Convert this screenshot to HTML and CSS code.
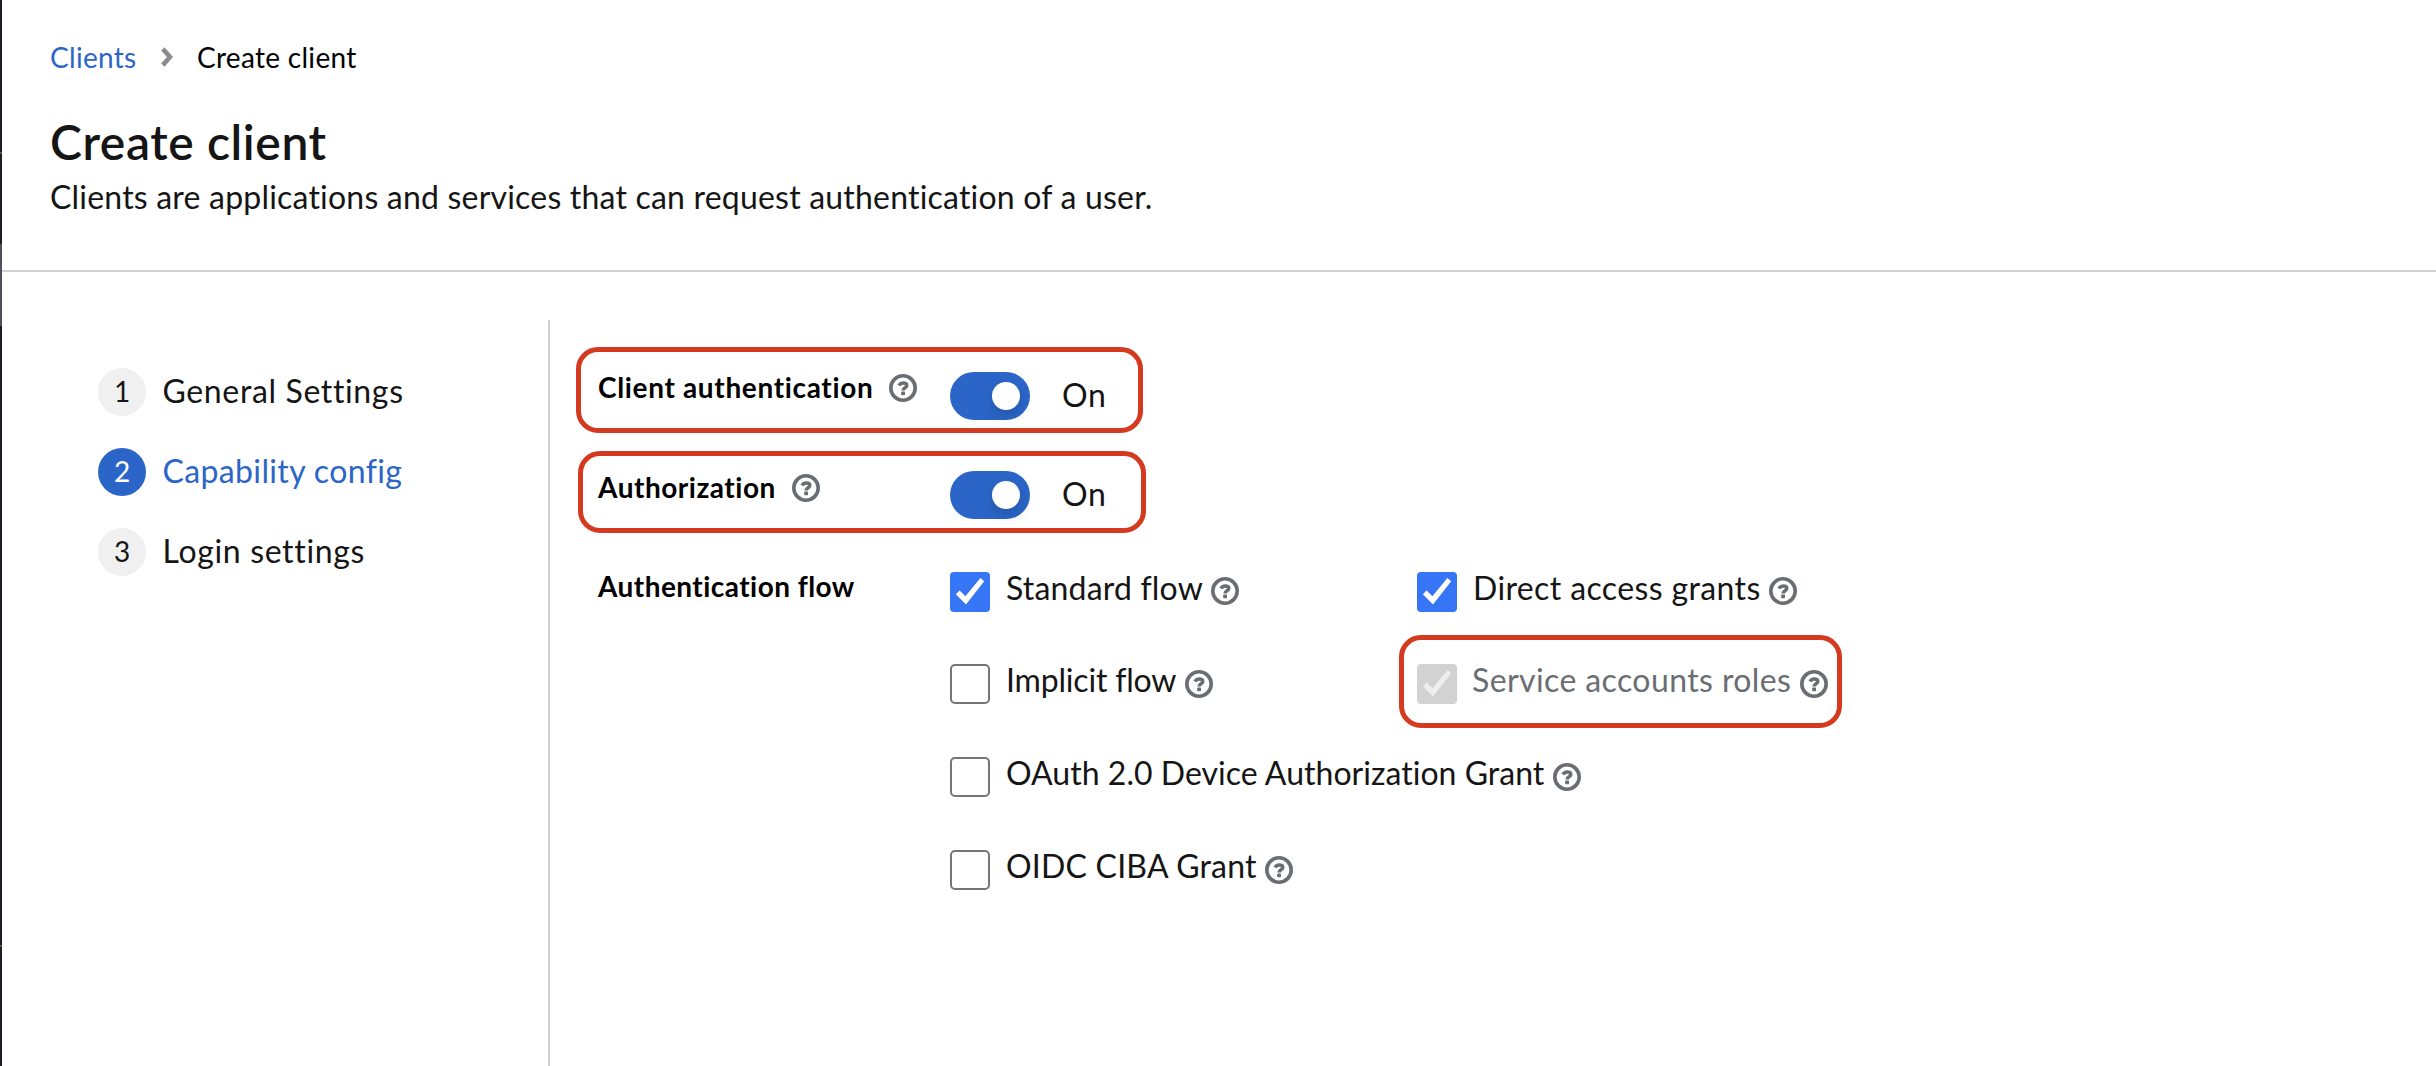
FILE: index.html
```
<!DOCTYPE html>
<html lang="en">
<head>
<meta charset="utf-8">
<title>Create client</title>
<link rel="stylesheet" href="styles.css">
</head>
<body>
<svg class="defs" aria-hidden="true">
  <symbol id="help" viewBox="0 0 28 28">
    <circle cx="14" cy="14" r="12.2" fill="none" stroke="currentColor" stroke-width="3.6"/>
    <path d="M10 11.6C10.9 9.7 12.2 9 14.2 9C16.3 9 17.8 9.8 17.8 11.4C17.8 13.8 14.1 13.6 14.1 16.4" fill="none" stroke="currentColor" stroke-width="3.5"/>
    <rect x="12.2" y="17.6" width="3.8" height="3.6" rx=".6" fill="currentColor"/>
  </symbol>
  <symbol id="check" viewBox="0 0 40 40">
    <path d="M5.8 22.2L9.6 18.4L15.4 24.2L30.4 6L34.2 9.2L16 32.6Z" fill="currentColor"/>
  </symbol>
</svg>
<div class="app">
  <div class="sidebar-edge"></div>
  <div class="page">
    <header class="header">
      <nav class="breadcrumb">
        <a class="crumb-link">Clients</a>
        <svg class="chevron" viewBox="0 0 12 20"><path d="M1.8 1.9L9 10L1.8 18.1" fill="none" stroke="currentColor" stroke-width="4.6"/></svg>
        <span class="crumb">Create client</span>
      </nav>
      <h1 class="title">Create client</h1>
      <p class="subtitle">Clients are applications and services that can request authentication of a user.</p>
    </header>
    <div class="wizard">
      <ol class="steps">
        <li class="step"><span class="num">1</span><span class="step-name general">General Settings</span></li>
        <li class="step current"><span class="num">2</span><span class="step-name capability">Capability config</span></li>
        <li class="step"><span class="num">3</span><span class="step-name login">Login settings</span></li>
      </ol>
      <main class="form">
        <div class="row">
          <div class="label client-auth"><span>Client authentication</span><svg class="help"><use href="#help"/></svg></div>
          <div class="control"><span class="switch"><span class="knob"></span></span><span class="state">On</span></div>
        </div>
        <div class="row">
          <div class="label authorization"><span>Authorization</span><svg class="help"><use href="#help"/></svg></div>
          <div class="control second"><span class="switch"><span class="knob"></span></span><span class="state">On</span></div>
        </div>
        <div class="row">
          <div class="label auth-flow"><span>Authentication flow</span></div>
          <div class="checks">
            <div class="check standard"><span class="box on"><svg><use href="#check"/></svg></span><span class="name">Standard flow</span><svg class="help"><use href="#help"/></svg></div>
            <div class="check direct"><span class="box on"><svg><use href="#check"/></svg></span><span class="name">Direct access grants</span><svg class="help"><use href="#help"/></svg></div>
            <div class="check implicit"><span class="box"></span><span class="name">Implicit flow</span><svg class="help"><use href="#help"/></svg></div>
            <div class="check service disabled"><span class="box"><svg><use href="#check"/></svg></span><span class="name">Service accounts roles</span><svg class="help"><use href="#help"/></svg></div>
            <div class="check oauth wide"><span class="box"></span><span class="name">OAuth 2.0 Device Authorization Grant</span><svg class="help"><use href="#help"/></svg></div>
            <div class="check oidc wide"><span class="box"></span><span class="name">OIDC CIBA Grant</span><svg class="help"><use href="#help"/></svg></div>
          </div>
        </div>
      </main>
    </div>
  </div>
</div>
<div class="mark mark-client"></div>
<div class="mark mark-authz"></div>
<div class="mark mark-service"></div>
</body>
</html>
```
FILE: styles.css
```
* { box-sizing: border-box; }
body {
  margin: 0;
  background: #fff;
  color: #151515;
  font: 400 32px/48px Lato, "Open Sans", sans-serif;
  overflow: hidden;
}
svg { display: block; }
.defs { position: absolute; width: 0; height: 0; }
.app { display: flex; height: 1066px; }
.sidebar-edge {
  width: 2px;
  flex: none;
  background: linear-gradient(#1b1d26 0 152px, #4f5058 152px 154px, #1b1d26 154px 244px, #4f5058 244px 326px, #1b1d26 326px 945px, #4f5058 945px 947px, #1b1d26 947px);
}
.page { flex: 1; display: flex; flex-direction: column; }

.header { height: 272px; flex: none; padding: 36px 0 0 48px; border-bottom: 2px solid #d2d2d2; }
.breadcrumb { display: flex; font-size: 28px; line-height: 42px; letter-spacing: .3px; }
.crumb-link { color: #2b65c7; }
.chevron { width: 12px; height: 20px; margin: 11px 24px 0 24.5px; color: #8a8d90; }
.crumb { color: #000; }
.title { margin: 33px 0 0; font-size: 48px; line-height: 62px; font-weight: 600; letter-spacing: .6px; }
.subtitle { margin: 0; letter-spacing: .2px; }

.wizard { display: flex; flex: 1; }
.steps {
  width: 548px;
  margin: 48px 0 0;
  padding: 48px 0 0 96px;
  list-style: none;
  border-right: 2px solid #d2d2d2;
  display: flex;
  flex-direction: column;
  gap: 32px;
}
.step { display: flex; gap: 16.5px; height: 48px; }
.num {
  width: 48px;
  height: 48px;
  border-radius: 50%;
  background: #f0f0f0;
  font-size: 28px;
  line-height: 47px;
  text-align: center;
}
.step-name { line-height: 46px; }
.general { letter-spacing: .64px; }
.capability { letter-spacing: .364px; }
.login { letter-spacing: .66px; }
.current { color: #2b65c7; }
.current .num { background: #2b65c7; color: #fff; }

.form { padding: 94px 0 0 48px; }
.row { display: grid; grid-template-columns: 352px 1fr; height: 100px; }
.label { display: flex; gap: 16px; color: #000; font-size: 28px; line-height: 42px; font-weight: 700; }
.help { width: 28px; height: 28px; color: #6a6e73; flex: none; }
.label .help { margin-top: 8px; }
.client-auth { letter-spacing: .66px; }
.authorization { letter-spacing: .52px; gap: 16.5px; }
.auth-flow { letter-spacing: .45px; margin-top: -1px; }
.control { display: flex; gap: 32px; padding-top: 6px; }
.control.second { padding-top: 5px; }
.switch { width: 80px; height: 48px; padding: 10px 10px 10px 42px; border-radius: 24px; background: #2b65c7; }
.knob { display: block; width: 28px; height: 28px; border-radius: 50%; background: #fff; box-shadow: 0 6px 14px rgba(3, 3, 3, .14); }
.state { line-height: 46px; letter-spacing: .7px; }

.checks { display: grid; grid-template-columns: 467px 1fr; grid-template-rows: 92px 93px 93px 40px; padding-top: 6px; align-content: start; }
.check { display: flex; height: 40px; white-space: nowrap; }
.check.wide { grid-column: 1 / -1; }
.box { width: 40px; height: 40px; flex: none; border: 2px solid #767676; border-radius: 5px; margin-right: 16px; }
.box svg { width: 40px; height: 40px; }
.box.on { border: 0; background: #3575f6; color: #fff; border-radius: 4px; }
.check .name { line-height: 31px; }
.check .help { margin: 5px 0 0 8.5px; }
.check.wide .help, .implicit .help, .service .help { margin-top: 6px; }
.standard .name { letter-spacing: .18px; }
.direct .name { letter-spacing: .38px; }
.implicit .name { letter-spacing: -.18px; }
.service .name { letter-spacing: .4px; }
.oauth .name { letter-spacing: .03px; }
.oidc .name { letter-spacing: .22px; }
.disabled .name { color: #6a6e73; }
.disabled .box { border: 0; background: #d2d2d2; color: #eee; border-radius: 4px; margin-right: 15px; }

.mark { position: absolute; border: 5px solid #d43a1f; border-radius: 22px; }
.mark-client { left: 576px; top: 347px; width: 567px; height: 86px; }
.mark-authz { left: 578px; top: 451px; width: 568px; height: 82px; }
.mark-service { left: 1399px; top: 635px; width: 443px; height: 93px; }
```
